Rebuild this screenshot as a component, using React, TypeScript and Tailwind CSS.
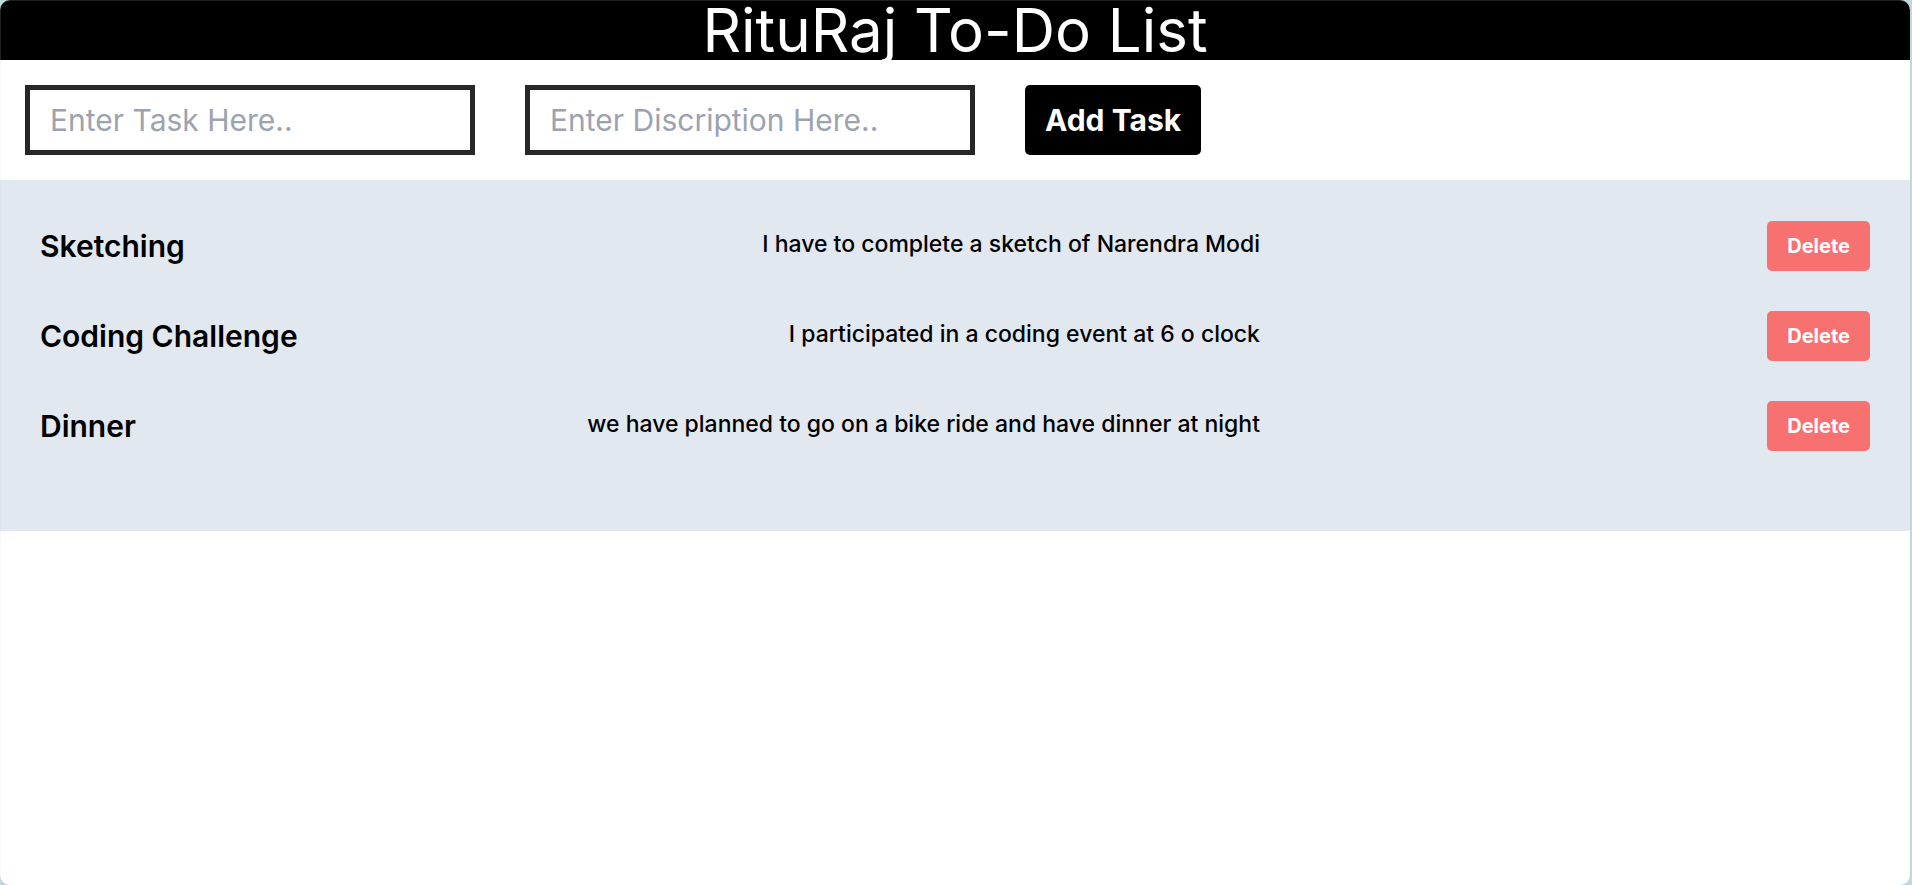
import { useState, type FormEvent } from "react";

interface Task {
  title: string;
  desc: string;
}

const initialTasks: Task[] = [
  { title: "Sketching", desc: "I have to complete a sketch of Narendra Modi" },
  { title: "Coding Challenge", desc: "I participated in a coding event at 6 o clock" },
  { title: "Dinner", desc: "we have planned to go on a bike ride and have dinner at night" },
];

const fieldClass =
  "m-[25px] h-[70px] w-[450px] border-5 border-[#27272a] bg-white px-5 text-[30px] text-black placeholder:text-[#9ca3af]";

export default function App() {
  const [title, setTitle] = useState("");
  const [desc, setDesc] = useState("");
  const [tasks, setTasks] = useState<Task[]>(initialTasks);

  const addTask = (e: FormEvent) => {
    e.preventDefault();
    setTasks([...tasks, { title, desc }]);
    setTitle("");
    setDesc("");
  };

  return (
    <div className="flex min-h-screen flex-col bg-[#bfdadd] pr-0.5 font-['Inter',sans-serif]">
      <div className="relative flex-1 rounded-[10px] bg-white">
        <h1 className="rounded-t-[10px] bg-black text-center text-[60px] leading-[60px] text-white">
          RituRaj To-Do List
        </h1>
        <form onSubmit={addTask} className="flex flex-wrap items-center">
          <input
            type="text"
            aria-label="Task"
            className={fieldClass}
            placeholder="Enter Task Here.."
            value={title}
            onChange={(e) => setTitle(e.target.value)}
          />
          <input
            type="text"
            aria-label="Description"
            className={fieldClass}
            placeholder="Enter Discription Here.."
            value={desc}
            onChange={(e) => setDesc(e.target.value)}
          />
          <button
            type="submit"
            className="m-[25px] h-[70px] rounded-[5px] bg-black px-5 text-[30px] font-bold text-white"
          >
            Add Task
          </button>
        </form>
        <ul className="flex flex-col gap-10 bg-[#e2e8f0] px-10 pt-[41px] pb-20">
          {tasks.map((task, i) => (
            <li key={i} className="flex items-center justify-between">
              <div className="flex w-2/3 items-start justify-between">
                <h2 className="text-[30px] leading-[50px] font-semibold">{task.title}</h2>
                <p className="text-[23px] leading-[46px] font-medium">{task.desc}</p>
              </div>
              <button
                type="button"
                onClick={() => setTasks(tasks.filter((_, n) => n !== i))}
                className="h-[50px] rounded-[5px] bg-[#f87171] px-5 text-[20px] font-bold text-white"
              >
                Delete
              </button>
            </li>
          ))}
        </ul>
        <div className="pointer-events-none absolute inset-0 rounded-[10px] border-t border-l border-[#bfdadd]/15" />
      </div>
    </div>
  );
}
